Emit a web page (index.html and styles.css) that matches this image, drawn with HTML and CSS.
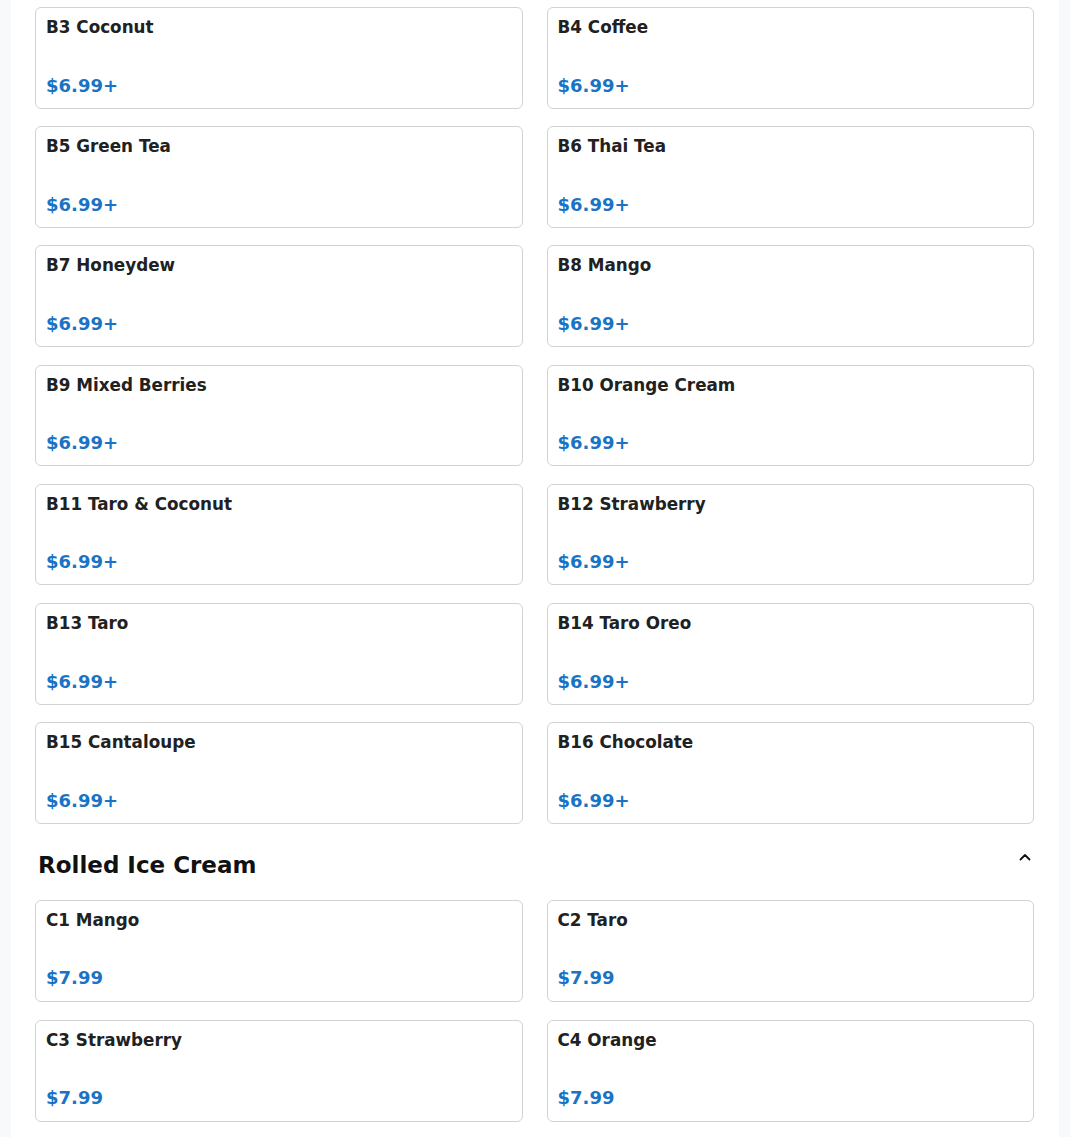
FILE: index.html
```html
<!DOCTYPE html>
<html lang="en">
<head>
<meta charset="utf-8">
<title>Menu</title>
<link rel="stylesheet" href="styles.css">
</head>
<body>
<main class="page">
  <section class="menu-section">
    <div class="grid">
      <div class="card"><div class="name">B3 Coconut</div><div class="price">$6.99+</div></div>
      <div class="card"><div class="name">B4 Coffee</div><div class="price">$6.99+</div></div>
      <div class="card"><div class="name">B5 Green Tea</div><div class="price">$6.99+</div></div>
      <div class="card"><div class="name">B6 Thai Tea</div><div class="price">$6.99+</div></div>
      <div class="card"><div class="name">B7 Honeydew</div><div class="price">$6.99+</div></div>
      <div class="card"><div class="name">B8 Mango</div><div class="price">$6.99+</div></div>
      <div class="card"><div class="name">B9 Mixed Berries</div><div class="price">$6.99+</div></div>
      <div class="card"><div class="name">B10 Orange Cream</div><div class="price">$6.99+</div></div>
      <div class="card"><div class="name">B11 Taro &amp; Coconut</div><div class="price">$6.99+</div></div>
      <div class="card"><div class="name">B12 Strawberry</div><div class="price">$6.99+</div></div>
      <div class="card"><div class="name">B13 Taro</div><div class="price">$6.99+</div></div>
      <div class="card"><div class="name">B14 Taro Oreo</div><div class="price">$6.99+</div></div>
      <div class="card"><div class="name">B15 Cantaloupe</div><div class="price">$6.99+</div></div>
      <div class="card"><div class="name">B16 Chocolate</div><div class="price">$6.99+</div></div>
    </div>
  </section>
  <section class="menu-section">
    <div class="section-header">
      <h2 class="section-title">Rolled Ice Cream</h2>
      <svg class="chevron" width="12" height="8" viewBox="0 0 12 8" aria-hidden="true"><polyline points="1.5,6.5 6,2 10.5,6.5" fill="none" stroke="currentColor" stroke-width="1.8" stroke-linecap="round" stroke-linejoin="round"/></svg>
    </div>
    <div class="grid grid-c">
      <div class="card"><div class="name">C1 Mango</div><div class="price">$7.99</div></div>
      <div class="card"><div class="name">C2 Taro</div><div class="price">$7.99</div></div>
      <div class="card"><div class="name">C3 Strawberry</div><div class="price">$7.99</div></div>
      <div class="card"><div class="name">C4 Orange</div><div class="price">$7.99</div></div>
    </div>
  </section>
</main>
</body>
</html>
```
FILE: styles.css
```css
html, body {
  margin: 0;
  padding: 0;
  background: #f8f9fa;
  font-family: "DejaVu Sans", sans-serif;
  color: #212121;
}

.page {
  width: 1048px;
  margin: 0 auto;
  background: #ffffff;
  box-sizing: border-box;
  padding: 7px 25px 40px 24px;
}

.grid {
  display: grid;
  grid-template-columns: 1fr 1fr;
  column-gap: 24px;
  row-gap: 17.5px;
}

.grid-c {
  row-gap: 18px;
}

.card {
  box-sizing: border-box;
  height: 101.7px;
  border: 1px solid #d2d2d2;
  border-radius: 6px;
  padding: 9px 10px 11.5px;
  display: flex;
  flex-direction: column;
  justify-content: space-between;
  background: #fff;
}

.grid-c .card {
  height: 102px;
}

.name {
  font-size: 16.8px;
  font-weight: bold;
  line-height: 1.2;
  color: #212121;
}

.price {
  font-size: 18px;
  font-weight: bold;
  line-height: 1.2;
  color: #1a73c4;
}

.section-header {
  display: flex;
  justify-content: space-between;
  align-items: flex-start;
  padding: 0 3px;
  margin: 28px 0 21.7px;
}

.section-title {
  margin: 0;
  font-size: 23px;
  font-weight: bold;
  line-height: normal;
  color: #111;
}

.chevron {
  display: block;
  margin-top: 1.5px;
  color: #111;
}
```
